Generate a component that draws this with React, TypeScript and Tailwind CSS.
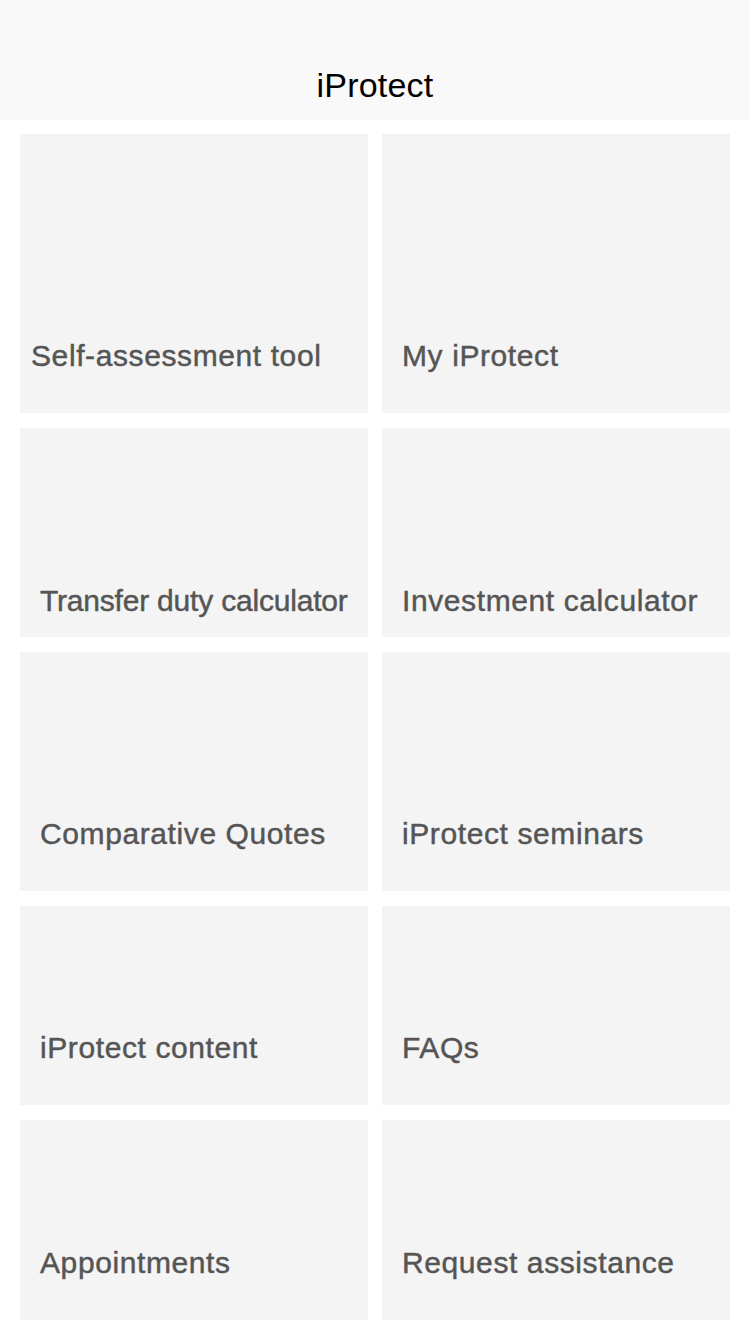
const tiles = [
  { label: 'Self-assessment tool', h: 'h-[279px]', pl: 'pl-[11px]', pb: 'pb-[42px]', tr: 'tracking-[0.6px]' },
  { label: 'My iProtect', h: 'h-[279px]', pl: 'pl-[20px]', pb: 'pb-[42px]', tr: 'tracking-[0.6px]' },
  { label: 'Transfer duty calculator', h: 'h-[209px]', pl: 'pl-[20px]', pb: 'pb-[21px]', tr: 'tracking-[-0.2px]' },
  { label: 'Investment calculator', h: 'h-[209px]', pl: 'pl-[20px]', pb: 'pb-[21px]', tr: 'tracking-[0.6px]' },
  { label: 'Comparative Quotes', h: 'h-[239px]', pl: 'pl-[20px]', pb: 'pb-[42px]', tr: 'tracking-[0.6px]' },
  { label: 'iProtect seminars', h: 'h-[239px]', pl: 'pl-[20px]', pb: 'pb-[42px]', tr: 'tracking-[0.6px]' },
  { label: 'iProtect content', h: 'h-[199px]', pl: 'pl-[20px]', pb: 'pb-[42px]', tr: 'tracking-[0.6px]' },
  { label: 'FAQs', h: 'h-[199px]', pl: 'pl-[20px]', pb: 'pb-[42px]', tr: 'tracking-[0.6px]' },
  { label: 'Appointments', h: 'h-[200px]', pl: 'pl-[20px]', pb: 'pb-[42px]', tr: 'tracking-[0.6px]' },
  { label: 'Request assistance', h: 'h-[200px]', pl: 'pl-[20px]', pb: 'pb-[42px]', tr: 'tracking-[0.6px]' },
];

export default function App() {
  return (
    <div className="min-h-[1334px] bg-white font-['Liberation_Sans',Arial,sans-serif]">
      <header className="flex h-[120px] items-end justify-center bg-[#f9f9f9] pb-[18px]">
        <h1 className="text-[34px] leading-none tracking-[0.2px] text-black">iProtect</h1>
      </header>
      <main className="mt-[14px] grid grid-cols-2 gap-x-[14px] gap-y-[15px] px-5">
        {tiles.map((t) => (
          <button
            key={t.label}
            className={`flex flex-col justify-end bg-[#f4f4f4] text-left ${t.h} ${t.pl} ${t.pb}`}
          >
            <span
              className={`whitespace-nowrap text-[30px] leading-none text-[#555555] [-webkit-text-stroke:0.45px_#555555] ${t.tr}`}
            >
              {t.label}
            </span>
          </button>
        ))}
      </main>
    </div>
  );
}
